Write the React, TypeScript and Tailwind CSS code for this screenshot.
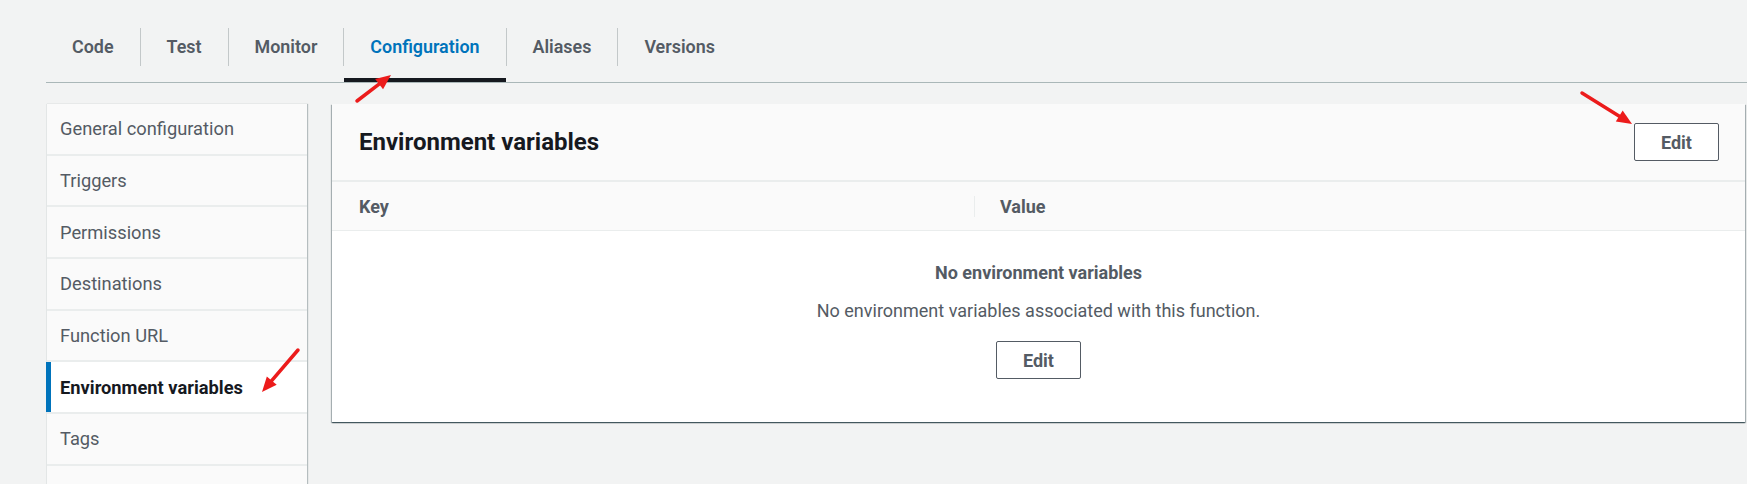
import React from 'react';

const tabs = ['Code', 'Test', 'Monitor', 'Configuration', 'Aliases', 'Versions'];

const sideItems = [
  'General configuration',
  'Triggers',
  'Permissions',
  'Destinations',
  'Function URL',
  'Environment variables',
  'Tags',
  '',
];

// Red annotation arrow, drawn from tail to tip
function Arrow({ x1, y1, x2, y2 }: { x1: number; y1: number; x2: number; y2: number }) {
  const dx = x2 - x1;
  const dy = y2 - y1;
  const len = Math.sqrt(dx * dx + dy * dy);
  const ux = dx / len;
  const uy = dy / len;
  const headLen = 15;
  const headW = 6.5;
  const bx = x2 - ux * headLen;
  const by = y2 - uy * headLen;
  const pts = `${x2},${y2} ${bx - uy * headW},${by + ux * headW} ${bx + uy * headW},${by - ux * headW}`;
  return (
    <g>
      <line x1={x1} y1={y1} x2={bx + ux * 2} y2={by + uy * 2} stroke="#ec1b1b" strokeWidth={3.5} strokeLinecap="round" />
      <polygon points={pts} fill="#ec1b1b" />
    </g>
  );
}

function EditButton() {
  return (
    <button className="h-[38px] w-[85px] rounded-[2px] border border-[#545b64] bg-white text-[18px] font-bold text-[#545b64]">
      Edit
    </button>
  );
}

export default function App() {
  return (
    <div
      className="relative h-[484px] w-full overflow-hidden bg-[#f2f3f3]"
      style={{ fontFamily: 'Roboto, "Open Sans", Arial, sans-serif' }}
    >
      {/* tabs */}
      <div className="ml-[46px] pt-[28px]">
        <div className="flex items-start border-b border-[#aab7b8]">
          {tabs.map((t, i) => (
            <React.Fragment key={t}>
              {i > 0 && <div className="h-[38px] w-px bg-[#c3c8c9]" />}
              <div className="flex flex-col">
                <div
                  className={`flex h-[38px] items-center px-[26px] text-[17.9px] font-semibold ${
                    t === 'Configuration' ? 'text-[#0073bb]' : 'text-[#545b64]'
                  }`}
                >
                  {t}
                </div>
                <div className={`mt-[12px] h-[4px] ${t === 'Configuration' ? 'bg-[#16191f]' : ''}`} />
              </div>
            </React.Fragment>
          ))}
        </div>
      </div>

      <div className="mt-[21px] flex items-start gap-[25px] pl-[46px] pr-[2px]">
        {/* side nav */}
        <div className="w-[261px] shrink-0 border-l border-[#e3e6e6] bg-[#fafafa] shadow-[1px_0_1px_0_rgba(0,28,36,0.25)]">
          {sideItems.map((s, i) => {
            const active = s === 'Environment variables';
            return (
              <div
                key={i}
                className={`relative flex h-[51.7px] items-center border-b-2 border-[#eaeded] pl-[13px] text-[18.3px] ${
                  active ? 'bg-white font-bold text-[#16191f]' : 'text-[#545b64]'
                }`}
              >
                {active && <div className="absolute -left-px top-0 h-full w-[5px] bg-[#0073bb]" />}
                {s}
              </div>
            );
          })}
        </div>

        {/* card */}
        <div className="flex-1 bg-white shadow-[0_1px_1px_0_rgba(0,28,36,0.5),1px_1px_1px_0_rgba(0,28,36,0.25),-1px_1px_1px_0_rgba(0,28,36,0.25)]">
          <div className="flex h-[78px] items-center justify-between border-b-2 border-[#eaeded] bg-[#fafafa] pl-[27px] pr-[26px]">
            <h2 className="text-[24px] font-bold text-[#16191f]">Environment variables</h2>
            <EditButton />
          </div>
          <div className="flex h-[49px] items-center border-b border-[#eaeded] bg-[#fafafa] text-[18px] font-bold text-[#545b64]">
            <div className="w-[642px] pl-[27px]">Key</div>
            <div className="h-[21px] w-px bg-[#eaeded]" />
            <div className="pl-[25px]">Value</div>
          </div>
          <div className="flex flex-col items-center pb-[43px] pt-[30px] text-[#545b64]">
            <div className="text-[18px] font-bold leading-[24px]">No environment variables</div>
            <div className="mt-[14px] text-[18px] leading-[24px]">No environment variables associated with this function.</div>
            <div className="mt-[18px]">
              <EditButton />
            </div>
          </div>
        </div>
      </div>

      {/* annotation arrows */}
      <svg className="pointer-events-none absolute left-0 top-0" width="1747" height="484">
        <Arrow x1={357} y1={101} x2={391} y2={75} />
        <Arrow x1={298} y1={350} x2={262} y2={392} />
        <Arrow x1={1582} y1={93} x2={1632} y2={124} />
      </svg>
    </div>
  );
}
